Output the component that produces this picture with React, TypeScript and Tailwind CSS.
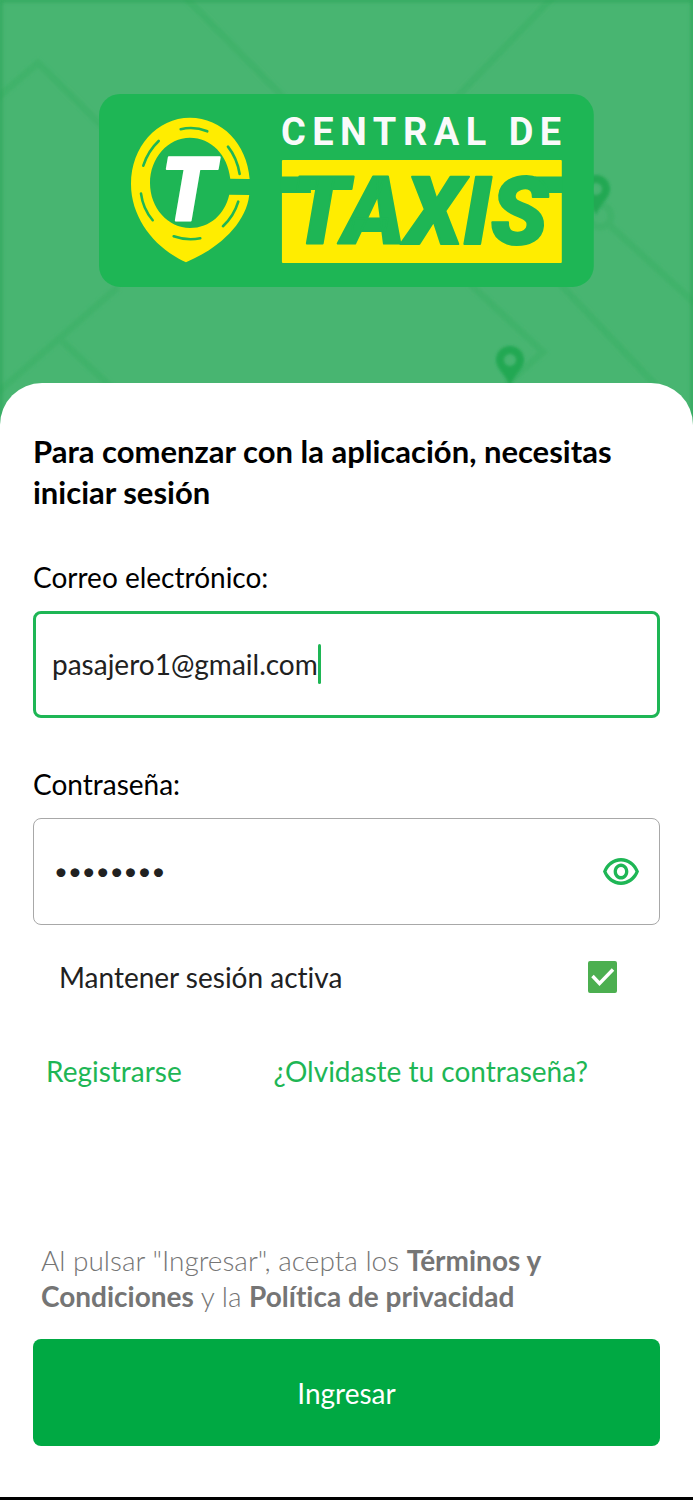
import { useState, type FC } from "react";

const MapBackground: FC = () => (
  <svg
    className="absolute inset-0 h-full w-full"
    viewBox="0 0 693 425"
    preserveAspectRatio="none"
    aria-hidden="true"
  >
    <defs>
      <filter id="soft">
        <feGaussianBlur stdDeviation="1.6" />
      </filter>
      <filter id="edge">
        <feGaussianBlur stdDeviation="2" />
      </filter>
    </defs>
    <g fill="none" stroke="#41b26a" strokeWidth="7" filter="url(#soft)">
      <path d="M184 -4L284 98" />
      <path d="M554 -4L456 98" />
      <path d="M-4 99L38 63L104 128" />
      <path d="M118 287L-4 394" />
      <path d="M62 341L112 388" />
      <path d="M470 284L543 352L505 386" />
      <path d="M560 284L662 392" />
      <path d="M606 222L700 308" />
      <circle cx="600" cy="216" r="11" />
    </g>
    <g fill="#20a852" fillRule="evenodd" filter="url(#soft)">
      <path d="M510 346c-8 0-14 6-14 14 0 9 9 14 14 26 5-12 14-17 14-26 0-8-6-14-14-14zm0 8a6 6 0 1 1 0 12a6 6 0 0 1 0-12z" />
      <path d="M596 175c-8 0-14 6-14 14 0 9 9 14 14 26 5-12 14-17 14-26 0-8-6-14-14-14zm0 8a6 6 0 1 1 0 12a6 6 0 0 1 0-12z" />
    </g>
    <path d="M0 430V0H693V430" fill="none" stroke="#2aa457" strokeWidth="3" filter="url(#edge)" />
  </svg>
);

const Logo: FC = () => (
  <svg
    className="relative w-[71.4%]"
    viewBox="0 0 495 193"
    role="img"
    aria-label="Central de Taxis"
    fontFamily="Roboto, 'Liberation Sans', sans-serif"
  >
    <rect width="495" height="193" rx="21" fill="#1eb655" />
    <path
      d="M150.7 85C148 50 123 23.7 91 23.7C58 23.7 32 53 32 90C32 125 57 155 87 168.3C119 155 147 130 150.3 101L130.3 100.7C126 120 111 134 91 134C69 134 51 114 51 89C51 64 69 43.7 91 43.7C112 43.7 129 61 131.3 84.7Z"
      fill="#ffed00"
    />
    <g fill="none" stroke="#1eb655" strokeWidth="2.6" strokeLinecap="round">
      <path d="M81.7 35.3Q95 32 108.3 37.3" />
      <path d="M59.7 47Q49 57 44.3 71.7" />
      <path d="M42 99.7Q44 115 53.7 126.3" />
      <path d="M74.7 142.3Q88 147 101.3 144.3" />
      <path d="M139.3 107.7Q135 122 124 132.3" />
      <path d="M129 52.7Q138 64 140.7 80" />
    </g>
    <text
      x="62"
      y="126"
      fontSize="88"
      fontWeight="900"
      fontStyle="italic"
      fill="#fff"
      stroke="#fff"
      strokeWidth="2"
      strokeLinejoin="round"
    >
      T
    </text>
    <text x="182" y="51" fontSize="38" fontWeight="700" letterSpacing="6.5" fill="#fafafa">
      CENTRAL DE
    </text>
    <rect x="183" y="66" width="280" height="103" rx="1" fill="#ffed00" />
    <path d="M182 82.5H212V99H182ZM436 82.5H464V99H436Z" fill="#1eb655" />
    <text
      x="192"
      y="150"
      fontSize="94"
      fontWeight="900"
      fontStyle="italic"
      fill="#1eb655"
      stroke="#1eb655"
      strokeWidth="2"
      strokeLinejoin="round"
    >
      TAXIS
    </text>
  </svg>
);

const EyeIcon: FC = () => (
  <svg className="h-[27px] w-9" viewBox="1 4 22 15" preserveAspectRatio="none" fill="currentColor" aria-hidden="true">
    <path d="M12 6c3.79 0 7.17 2.13 8.82 5.5C19.17 14.87 15.79 17 12 17s-7.17-2.13-8.82-5.5C4.83 8.13 8.21 6 12 6m0-2C7 4 2.73 7.11 1 11.5 2.73 15.89 7 19 12 19s9.27-3.11 11-7.5C21.27 7.11 17 4 12 4zm0 5a2.5 2.5 0 0 1 0 5 2.5 2.5 0 0 1 0-5m0-2c-2.48 0-4.5 2.02-4.5 4.5S9.52 16 12 16s4.5-2.02 4.5-4.5S14.48 7 12 7z" />
  </svg>
);

export default function App() {
  const [email, setEmail] = useState("pasajero1@gmail.com");
  const [password, setPassword] = useState("12345678");
  const [showPassword, setShowPassword] = useState(false);
  const [keepSession, setKeepSession] = useState(true);

  return (
    <div className="flex min-h-screen flex-col border-b-3 border-black bg-white font-[Lato,'Liberation_Sans',sans-serif] text-[28px] leading-8 text-black [font-variant-ligatures:none]">
      <header className="relative flex justify-center bg-[#48b571] pt-[94px] pb-[138px]">
        <MapBackground />
        <Logo />
      </header>

      <main className="relative -mt-[42px] flex flex-1 flex-col rounded-t-[42px] bg-white px-[33px] pt-12 pb-[51px]">
        <form className="flex flex-1 flex-col" onSubmit={(e) => e.preventDefault()}>
          <h1 className="text-[31px] leading-[41px] font-bold">
            Para comenzar con la aplicación, necesitas iniciar sesión
          </h1>

          <label htmlFor="email" className="mt-12">
            Correo electrónico:
          </label>
          <div className="mt-[18px] flex h-[107px] items-center rounded-lg border-3 border-[#1eb655] px-4">
            <input
              id="email"
              type="email"
              value={email}
              onChange={(e) => setEmail(e.target.value)}
              className="field-sizing-content max-w-full text-[#212121] caret-transparent outline-none"
            />
            <span className="h-10 w-[3px] rounded-full bg-[#1eb655]" />
          </div>

          <label htmlFor="password" className="mt-[50px]">
            Contraseña:
          </label>
          <div className="mt-[18px] flex h-[107px] items-center rounded-lg border border-[#a8a8a8] px-5">
            <input
              id="password"
              type={showPassword ? "text" : "password"}
              value={password}
              onChange={(e) => setPassword(e.target.value)}
              className="min-w-0 flex-1 text-2xl text-[#212121] outline-none"
            />
            <button
              type="button"
              aria-label="Mostrar contraseña"
              onClick={() => setShowPassword((v) => !v)}
              className="text-[#1eb655]"
            >
              <EyeIcon />
            </button>
          </div>

          <div className="mt-9 flex items-center justify-between pr-[43px] pl-[26px]">
            <label htmlFor="keep" className="text-[#212121]">
              Mantener sesión activa
            </label>
            <span className="relative h-8 w-[29px]">
              <input
                id="keep"
                type="checkbox"
                checked={keepSession}
                onChange={(e) => setKeepSession(e.target.checked)}
                className="block h-full w-full appearance-none rounded-xs border-2 border-[#4caf50] checked:bg-[#4caf50]"
              />
              {keepSession && (
                <svg
                  className="pointer-events-none absolute inset-0 h-full w-full"
                  viewBox="0 0 29 32"
                  fill="none"
                  stroke="#fff"
                  strokeWidth="3.4"
                  aria-hidden="true"
                >
                  <path d="M4.5 15L11.5 22.5L25 8.5" />
                </svg>
              )}
            </span>
          </div>

          <div className="mt-[62px] flex justify-between pr-[72px] pl-[13px] text-[#1eb655]">
            <a href="#registro">Registrarse</a>
            <a href="#recuperar">¿Olvidaste tu contraseña?</a>
          </div>

          <div className="mt-auto">
            <p className="px-2 leading-9 font-light text-[#757575]">
              Al pulsar "Ingresar", acepta los{" "}
              <a href="#terminos" className="font-bold">
                Términos y Condiciones
              </a>{" "}
              y la{" "}
              <a href="#privacidad" className="font-bold">
                Política de privacidad
              </a>
            </p>
            <button type="submit" className="mt-[25px] h-[107px] w-full rounded-lg bg-[#00a943] text-white">
              Ingresar
            </button>
          </div>
        </form>
      </main>
    </div>
  );
}
